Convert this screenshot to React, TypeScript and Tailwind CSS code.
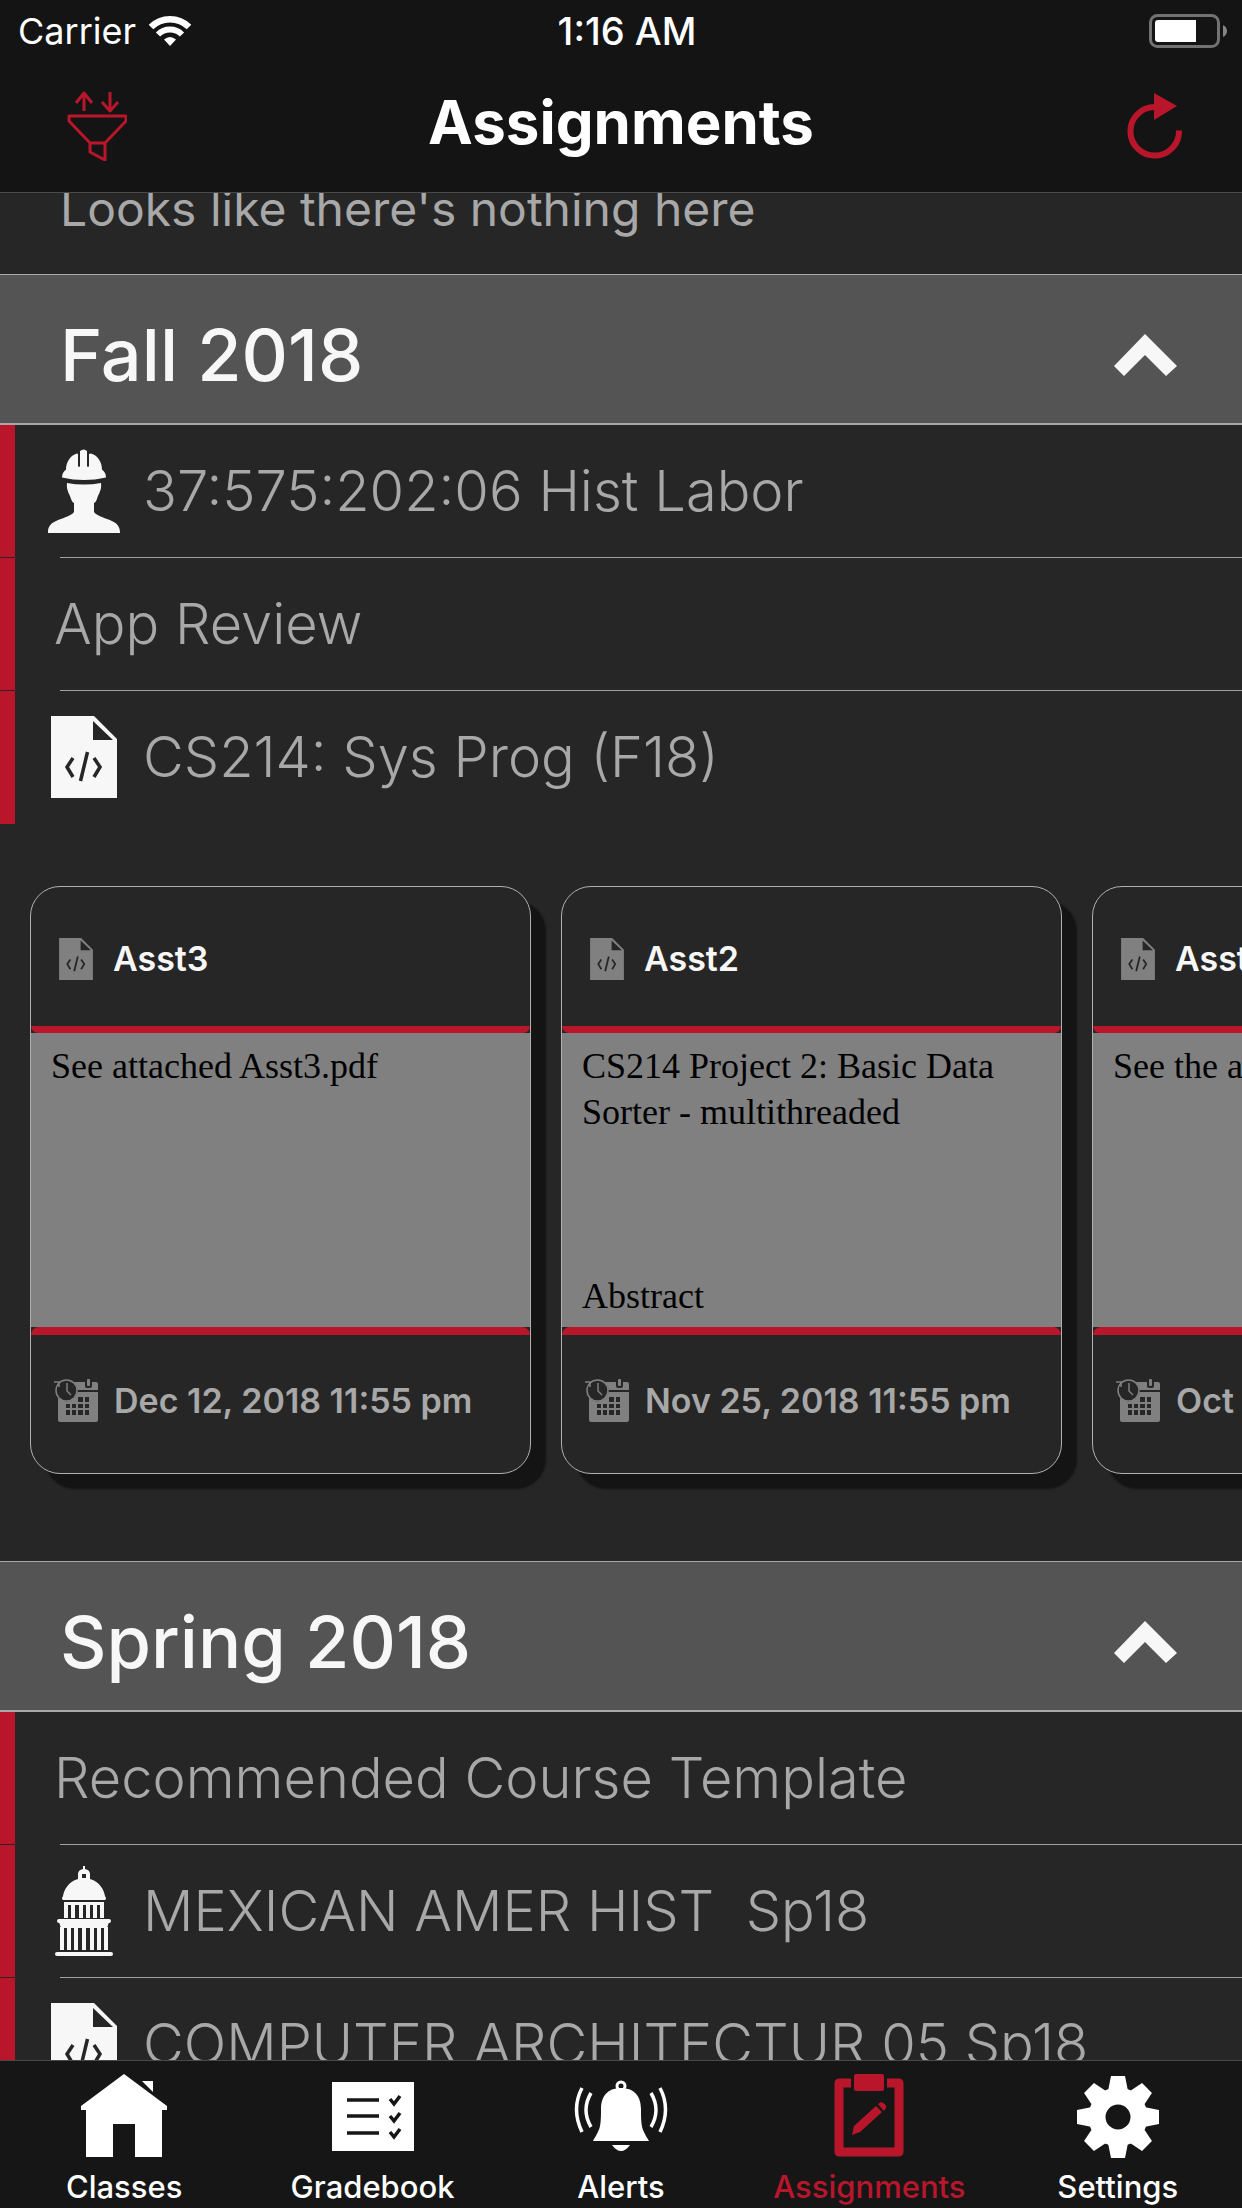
import React from "react";

function FilterIcon() {
  return (
    <svg width="60" height="70" viewBox="0 0 60 70" fill="none" stroke="#b9162b" strokeWidth="3" strokeLinejoin="round">
      <path d="M17 20V2M9 12l8-10 8 10M43 1v18M35 11l8 9 8-9" />
      <path d="M2 25h57v5L38 52H23L2 30zM23 52v9l15 8V52" />
    </svg>
  );
}

function RefreshIcon() {
  return (
    <svg width="56" height="66" viewBox="0 0 56 66" fill="none">
      <path d="M28 14A24.300 24.300 0 1 0 52 37.500" stroke="#b9162b" strokeWidth="6" />
      <path d="M27 0l23 13-23 14z" fill="#b9162b" />
    </svg>
  );
}

function WifiIcon() {
  return (
    <svg width="44" height="32" viewBox="0 0 44 32" fill="none" stroke="#fff" strokeWidth="6.500">
      <path d="M3 12a27 27 0 0 1 38 0" />
      <path d="M10 19.500a17 17 0 0 1 24 0" strokeWidth="6" />
      <path d="M22 31l-6-6.500q6-5 12 0z" fill="#fff" stroke="none" />
    </svg>
  );
}

function BatteryIcon() {
  return (
    <svg width="80" height="36" viewBox="0 0 80 36">
      <rect x="2.500" y="2.500" width="68" height="31" rx="7" fill="none" stroke="#727272" strokeWidth="3" />
      <path d="M10 7h38v22H10a3 3 0 0 1-3-3V10a3 3 0 0 1 3-3z" fill="#fff" />
      <path d="M75 12q4 2 4 6t-4 6z" fill="#858585" />
    </svg>
  );
}

function Chevron() {
  return (
    <svg width="64" height="42" viewBox="0 0 64 42" fill="#f7f7f7">
      <path d="M31 0l32 32-11 10-21-21-21 21L0 32z" />
    </svg>
  );
}

function CodeFile({ className }: { className: string }) {
  return (
    <svg className={className} viewBox="0 0 66 82" fill="currentColor">
      <path fillRule="evenodd" d="M0 0h43l23 23v59H0zM42 5v19h20z" />
      <path d="M22 42l-6 9 6 10M43 42l6 9-6 10M36.500 36l-7 29" fill="none" stroke="#262626" strokeWidth="3.500" />
    </svg>
  );
}

function Worker() {
  return (
    <svg className="h-[84px] w-[72px]" viewBox="0 0 72 84" fill="#f7f7f7">
      <path d="M32 2q4-3 7 0v15q1 2 2 0V5l2-.500c7 2 11 9 11 16q4 3 4 8-22 5-44 0 0-5 4-8c0-7 4-14 11-16l1 .500v12q1 2 2 0z" />
      <path d="M19 34q17 3 34 0c1 8-3 11-4 16q-1 3-3 4v9c6 8 26 6 26 20v1H0v-1c0-14 20-12 26-20v-9q-2-1-3-4c-1-5-5-8-4-16z" />
    </svg>
  );
}

function Capitol() {
  return (
    <svg className="h-[91px] w-[58px]" viewBox="0 0 58 91" fill="#f7f7f7">
      <path fillRule="evenodd" d="M28 1h2v3q5 1 5 5v5c10 3 14 11 15 17q2 3 0 4H8q-2-1 0-4c1-6 5-14 15-17V9q0-4 5-5zM27 9v4h4V9z" />
      <path fillRule="evenodd" d="M9 37h40v16H9zM13 40v13h3V40zm7 0v13h4V40zm8 0v13h3V40zm7 0v13h3V40zm7 0v13h3V40z" />
      <rect x="2" y="54" width="54" height="4" rx="2" />
      <path d="M4 57h50l-2 6H6z" />
      <path d="M5 62h4v23H5zm7 0h4v23h-4zm7 0h4v23h-4zm8 0h4v23h-4zm8 0h4v23h-4zm7 0h4v23h-4zm7 0h4v23h-4z" />
      <rect x="0" y="87" width="58" height="4" rx="2" />
    </svg>
  );
}

function CalendarIcon() {
  return (
    <svg className="h-[43px] w-[44px] shrink-0" viewBox="0 0 44 43">
      <path d="M4 3h38q2 0 2 2v36q0 2-2 2H6q-2 0-2-2z" fill="#808080" />
      <path d="M22 12h22" stroke="#262626" strokeWidth="2" />
      <path d="M31 0v7q0 2 2 2h3q2 0 2-2V0z" fill="#262626" />
      <rect x="33" y="0" width="3" height="7" rx="1" fill="#808080" />
      <path d="M24 18h5v5h-5zm7 0h4v5h-4zM12 25h4v4h-4zm6 0h4v4h-4zm6 0h5v4h-5zm7 0h4v4h-4zM12 31h4v5h-4zm6 0h4v5h-4zm6 0h5v5h-5zm7 0h4v5h-4z" fill="#262626" />
      <circle cx="12.500" cy="11.500" r="11" fill="#262626" />
      <circle cx="12.500" cy="11.500" r="10.500" fill="none" stroke="#808080" strokeWidth="1.500" />
      <path d="M13 4v8l4 4M0 3h5v5" fill="none" stroke="#808080" strokeWidth="1.500" />
    </svg>
  );
}

function HomeIcon() {
  return (
    <svg width="88" height="84" viewBox="0 0 88 84" fill="#fff">
      <path d="M44 0l43 32v4h-5v47H55V50H33v33H6V36H1v-4zM62 7h11v11z" />
    </svg>
  );
}

function GradebookIcon() {
  return (
    <svg width="82" height="84" viewBox="0 0 82 84">
      <path d="M0 8h82v69H0z" fill="#fff" />
      <path d="M15 26h32M15 42h32M15 59h32M58 25l4 5 6-8M58 42l4 5 6-8M58 58l4 5 6-8" fill="none" stroke="#161616" strokeWidth="3.500" />
    </svg>
  );
}

function AlertsIcon() {
  return (
    <svg width="94" height="84" viewBox="0 0 94 84" fill="#fff">
      <circle cx="47" cy="12" r="4" fill="none" stroke="#fff" strokeWidth="3" />
      <path d="M47 14c14 0 20 9 20 21 0 19 1 20 8 32H19c7-12 8-13 8-32 0-12 6-21 20-21zM38 71h18q-9 12-18 0z" />
      <path d="M8 14q-11 21 0 44M17 19q-10 17 0 34M86 14q11 21 0 44M77 19q10 17 0 34" fill="none" stroke="#fff" strokeWidth="3.500" />
    </svg>
  );
}

function AssignmentsIcon() {
  return (
    <svg width="70" height="84" viewBox="0 0 70 84" fill="#b9162b">
      <path d="M17 9H5v69h60V9H53" fill="none" stroke="#b9162b" strokeWidth="9" strokeLinejoin="round" />
      <rect x="20" y="0" width="30" height="17" rx="2" />
      <path d="M18 61l2-9 22-20 6 6-22 20zM44 30l3-2q6 2 5 6l-2 3z" />
    </svg>
  );
}

function SettingsIcon() {
  return (
    <svg width="84" height="84" viewBox="-42 -43 84 84" fill="#fff">
      <circle r="21" fill="none" stroke="#fff" strokeWidth="17" />
      {[0, 45, 90, 135, 180, 225, 270, 315].map((a) => (
        <path key={a} d="M-10-26L-7-41H7L10-26z" transform={`rotate(${a})`} />
      ))}
    </svg>
  );
}

function TermHeader({ title }: { title: string }) {
  return (
    <button className="flex h-[151px] w-full items-center justify-between border-t border-b-2 border-[#a8a8a8] bg-[#545454] pt-3 pr-16 pl-[60px] text-left">
      <h2 className="text-[72px] leading-[96px] font-medium text-[#f7f7f7]">{title}</h2>
      <Chevron />
    </button>
  );
}

function CourseRow({ name, icon, last }: { name: string; icon?: React.ReactNode; last?: boolean }) {
  return (
    <li className="flex h-[133px]">
      <span className={last ? "w-[15px] bg-[#b9162b]" : "mb-px w-[15px] bg-[#b9162b]"} />
      <a href="#course" className="relative flex min-w-0 flex-1 items-center pb-0.5 pl-[39px] whitespace-pre text-[56px] leading-[72px] font-light text-[#a8a8a8]">
        {icon && <span className="-ml-[7px] mr-[22px] flex w-[74px] shrink-0 justify-center">{icon}</span>}
        {name}
        {!last && <span className="absolute right-0 bottom-0 left-[45px] h-px bg-[#a0a0a0]" />}
      </a>
    </li>
  );
}

function AssignmentCard({ title, body, due }: { title: string; body: string[]; due: string }) {
  return (
    <article className="flex h-[588px] w-[501px] shrink-0 flex-col overflow-hidden rounded-[30px] border border-[#b0b0b0] bg-[#262626] shadow-[15px_15px_2px_#141414]">
      <header className="flex h-[139px] items-center gap-5 pt-1 pl-7 text-[34px] font-semibold text-[#f7f7f7]">
        <CodeFile className="h-[42px] w-[34px] shrink-0 text-[#808080]" />
        {title}
      </header>
      <div className="h-[7px] rounded-b-lg bg-[#b9162b]" />
      <div className="h-[294px] bg-[#808080] px-5 pt-[10px] font-['Liberation_Serif'] text-[36px] leading-[46px] text-black">
        {body.map((line, i) => (
          <p key={i} className="min-h-[46px]">{line}</p>
        ))}
      </div>
      <div className="h-2 rounded-t-lg bg-[#b9162b]" />
      <footer className="flex flex-1 items-center gap-4 pb-2 pl-[23px] text-[34px] font-semibold whitespace-nowrap text-[#a8a8a8]">
        <CalendarIcon />
        {due}
      </footer>
    </article>
  );
}

const tabs = [
  { label: "Classes", icon: <HomeIcon /> },
  { label: "Gradebook", icon: <GradebookIcon /> },
  { label: "Alerts", icon: <AlertsIcon /> },
  { label: "Assignments", icon: <AssignmentsIcon />, active: true },
  { label: "Settings", icon: <SettingsIcon /> },
];

export default function App() {
  return (
    <div className="flex h-screen flex-col overflow-hidden bg-[#262626] font-['Inter',sans-serif]">
      <div className="grid h-16 shrink-0 grid-cols-3 items-center bg-[#141414] pr-3.5 pb-0.5 pl-[18px] text-[36px] leading-[60px] text-white">
        <div className="flex items-center gap-3">Carrier <WifiIcon /></div>
        <div className="pl-2 text-center text-[38px] font-medium">1:16 AM</div>
        <div className="flex justify-end"><BatteryIcon /></div>
      </div>
      <header className="grid h-[129px] shrink-0 grid-cols-[1fr_auto_1fr] items-center border-b border-[#4a4a4a] bg-[#141414] px-[59px] pb-1">
        <button aria-label="Filter" className="justify-self-start pl-2"><FilterIcon /></button>
        <h1 className="pb-2 text-[60px] leading-[80px] font-bold text-white">Assignments</h1>
        <button aria-label="Refresh" className="justify-self-end"><RefreshIcon /></button>
      </header>
      <main className="flex min-h-0 flex-1 flex-col justify-start overflow-hidden *:shrink-0">
        <p className="-mt-5 h-[101px] pl-[60px] text-[48px] leading-[72px] text-[#a8a8a8]">Looks like there's nothing here</p>
        <section>
          <TermHeader title="Fall 2018" />
          <ul>
            <CourseRow name="37:575:202:06 Hist Labor" icon={<Worker />} />
            <CourseRow name="App Review" />
            <CourseRow name="CS214: Sys Prog (F18)" icon={<CodeFile className="h-[82px] w-[66px] text-[#f7f7f7]" />} last />
          </ul>
          <div className="flex gap-[30px] overflow-hidden px-[30px] pt-[62px] pb-[87px]">
            <AssignmentCard title="Asst3" body={["See attached Asst3.pdf"]} due="Dec 12, 2018 11:55 pm" />
            <AssignmentCard title="Asst2" body={["CS214 Project 2: Basic Data Sorter - multithreaded", "", "", "", "Abstract"]} due="Nov 25, 2018 11:55 pm" />
            <AssignmentCard title="Asst1" body={["See the attached pdf"]} due="Oct 14, 2018 11:55 pm" />
          </div>
        </section>
        <section>
          <TermHeader title="Spring 2018" />
          <ul>
            <CourseRow name="Recommended Course Template" />
            <CourseRow name="MEXICAN AMER HIST  Sp18" icon={<Capitol />} />
            <CourseRow name="COMPUTER ARCHITECTUR 05 Sp18" icon={<CodeFile className="h-[82px] w-[66px] text-[#f7f7f7]" />} last />
          </ul>
        </section>
      </main>
      <nav className="grid h-[148px] shrink-0 grid-cols-5 border-t border-[#4a4a4a] bg-[#161616]">
        {tabs.map((t) => (
          <button key={t.label} className={t.active ? "flex flex-col items-center pt-[13px] text-[31px] leading-[58px] font-medium text-[#b9162b]" : "flex flex-col items-center pt-[13px] text-[31px] leading-[58px] font-medium text-white"}>
            {t.icon}
            {t.label}
          </button>
        ))}
      </nav>
    </div>
  );
}
